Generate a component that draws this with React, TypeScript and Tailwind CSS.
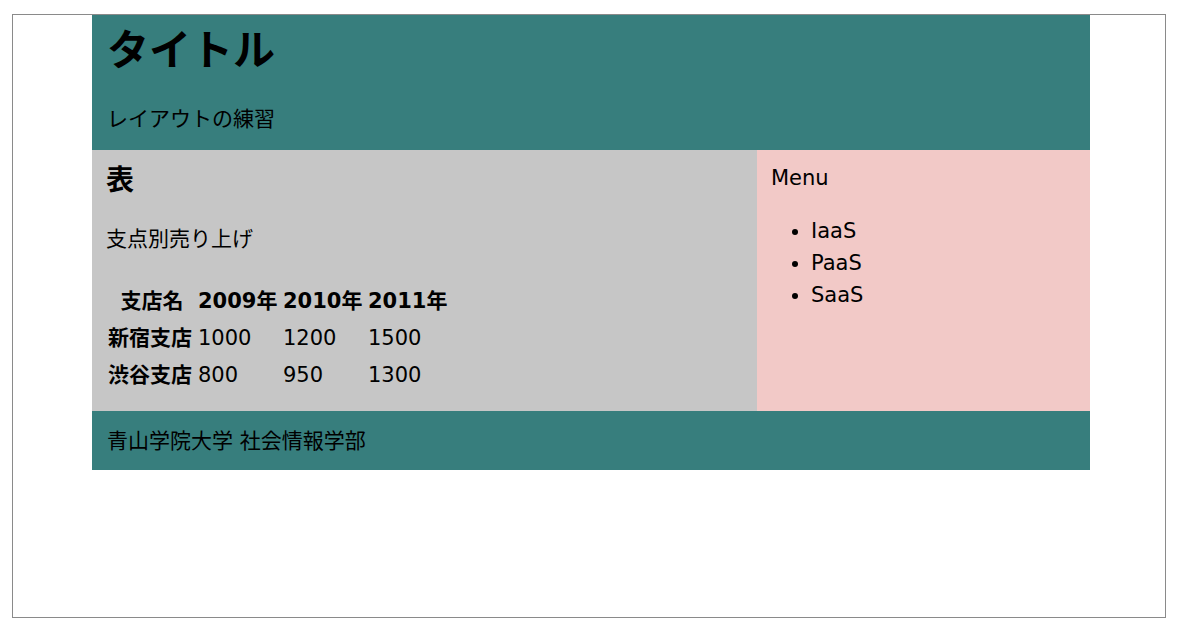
const font = "font-['DejaVu_Sans','Noto_Sans_CJK_JP',sans-serif]";

const rows = [
  { name: '新宿支店', values: ['1000', '1200', '1500'] },
  { name: '渋谷支店', values: ['800', '950', '1300'] },
];

export default function App() {
  return (
    <div className={`w-[1178px] h-[634px] bg-white pt-[14px] pl-[12px] ${font} text-black`}>
      <div className="w-[1154px] h-[604px] border border-[#8a8a8a]">
        <div className="ml-[79px] w-[998px]">
          {/* Header */}
          <header className="bg-[#377e7d] px-[15px] pt-[12px] pb-[16px]">
            <h1 className="text-[42px] font-bold leading-[48px]">タイトル</h1>
            <p className="mt-[29px] text-[21px] leading-[30px]">レイアウトの練習</p>
          </header>

          {/* Main + Menu */}
          <div className="flex">
            <main className="w-[665px] bg-[#c6c6c6] px-[14px] pt-[13px] pb-[17px]">
              <h2 className="text-[28px] font-bold leading-[36px]">表</h2>
              <p className="mt-[25px] text-[21px] leading-[30px]">支点別売り上げ</p>
              <table className="mt-[29px] text-[21px] border-collapse">
                <thead>
                  <tr className="h-[37px]">
                    <th className="w-[92px] text-center font-bold">支店名</th>
                    <th className="w-[85px] text-left font-bold">2009年</th>
                    <th className="w-[85px] text-left font-bold">2010年</th>
                    <th className="w-[85px] text-left font-bold">2011年</th>
                  </tr>
                </thead>
                <tbody>
                  {rows.map((r) => (
                    <tr key={r.name} className="h-[37px]">
                      <th className="text-left font-bold pl-[2px]">{r.name}</th>
                      {r.values.map((v, i) => (
                        <td key={i} className="font-normal">{v}</td>
                      ))}
                    </tr>
                  ))}
                </tbody>
              </table>
            </main>
            <aside className="w-[333px] bg-[#f2c9c7] px-[14px] pt-[13px]">
              <p className="text-[21px] leading-[30px]">Menu</p>
              <ul className="mt-[22px] list-disc pl-[40px] text-[21px] leading-[32px]">
                <li>IaaS</li>
                <li>PaaS</li>
                <li>SaaS</li>
              </ul>
            </aside>
          </div>

          {/* Footer */}
          <footer className="bg-[#377e7d] px-[15px] h-[59px] flex items-center">
            <p className="text-[21px] leading-[30px]">青山学院大学 社会情報学部</p>
          </footer>
        </div>
      </div>
    </div>
  );
}
